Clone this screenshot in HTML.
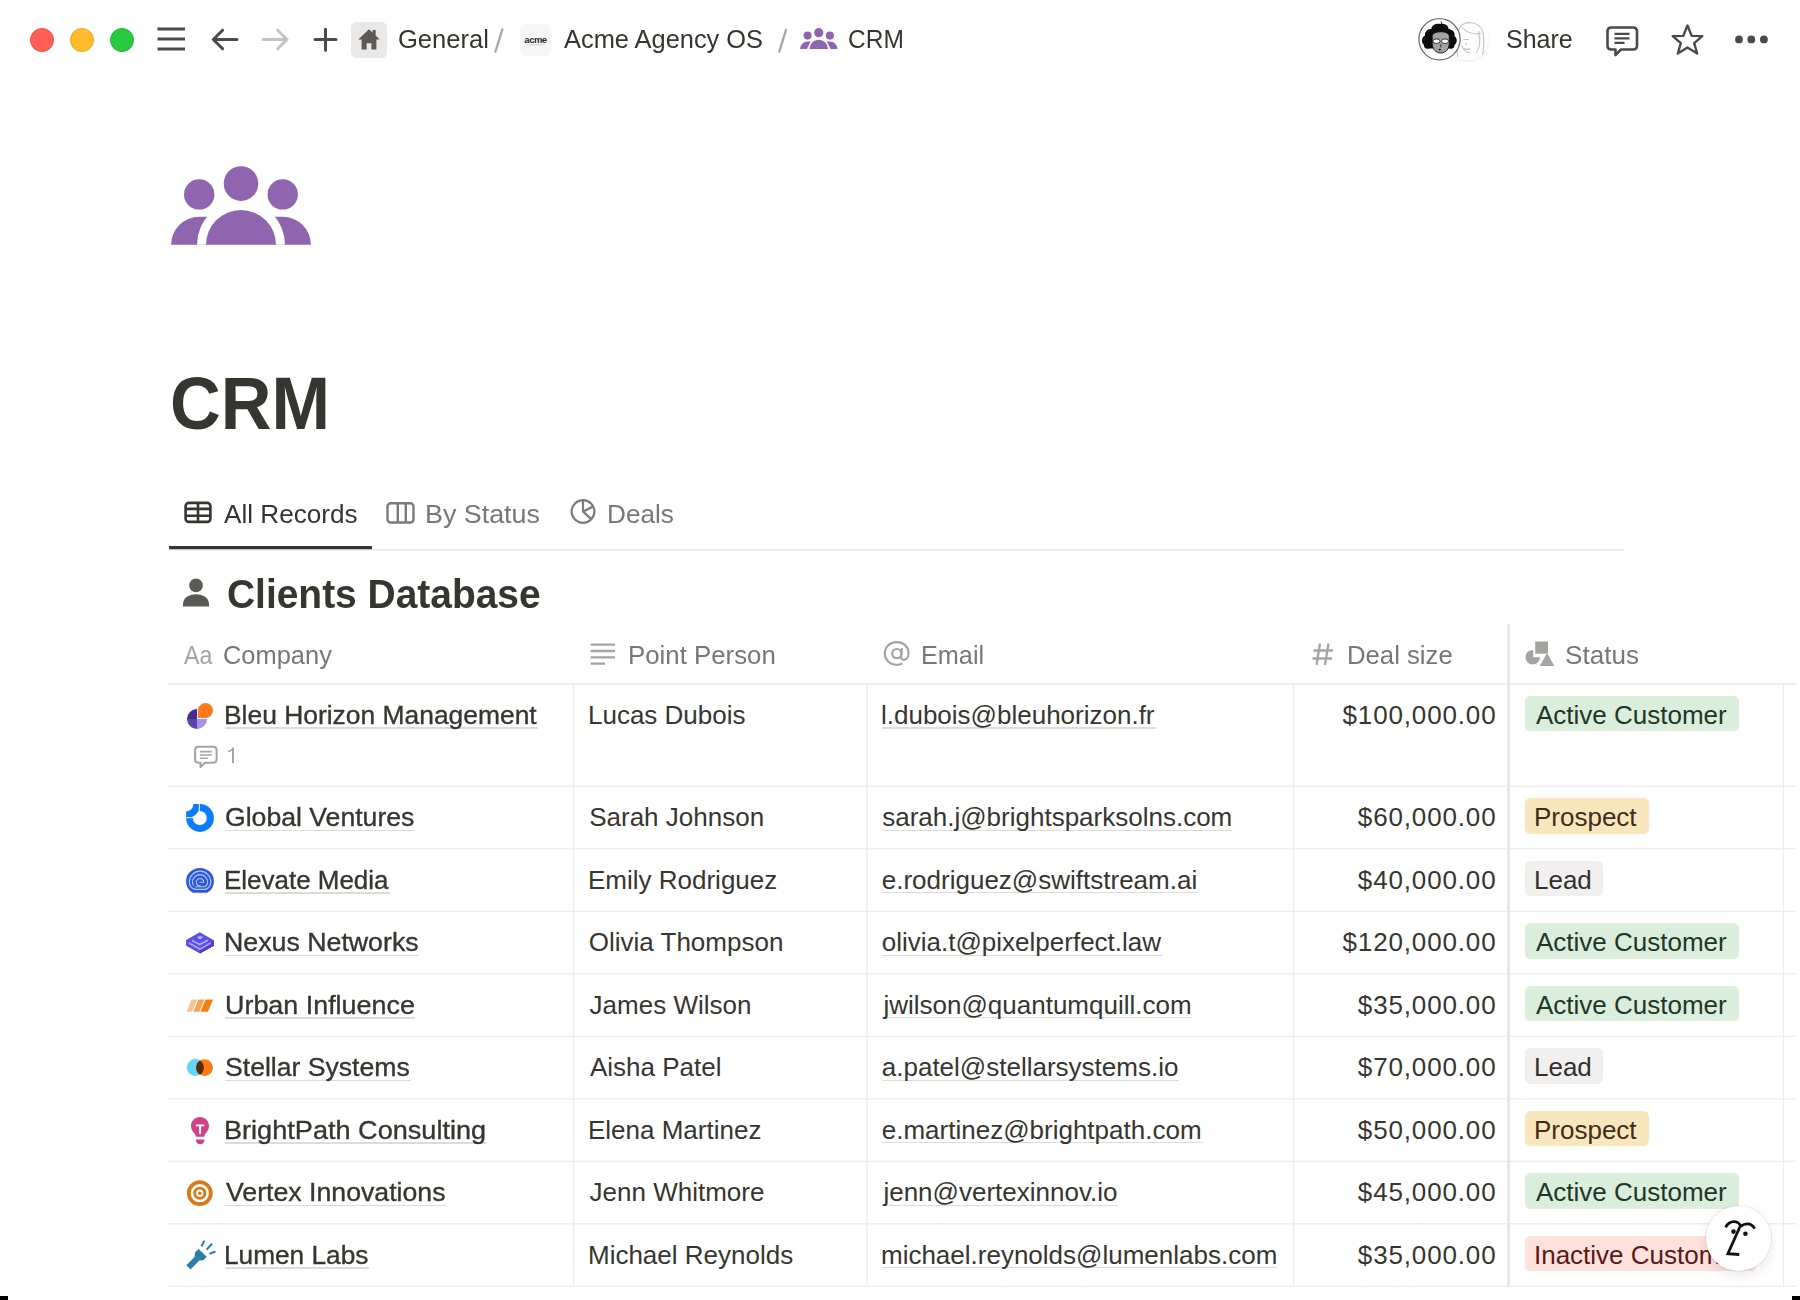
<!DOCTYPE html>
<html><head><meta charset="utf-8"><title>CRM</title>
<style>
html,body{margin:0;padding:0;background:#fff;}
body{width:1800px;height:1300px;position:relative;overflow:hidden;font-family:"Liberation Sans",sans-serif;}
.t{position:absolute;white-space:nowrap;}
.abs{position:absolute;}
svg.abs{overflow:visible;}
</style></head><body>

<svg class="abs" width="1800" height="80" viewBox="0 0 1800 80" style="left:0;top:0"><circle cx="42" cy="40" r="11.6" fill="#ff5f57" stroke="#e2463f" stroke-width="0.8"/><circle cx="82" cy="40" r="11.6" fill="#febc2e" stroke="#e1a116" stroke-width="0.8"/><circle cx="122" cy="40" r="11.6" fill="#28c840" stroke="#1aab29" stroke-width="0.8"/><g stroke="#4a4a48" stroke-width="3.2" stroke-linecap="butt"><path d="M157.5 29H185M157.5 39H185M157.5 49H185"/></g><g fill="none" stroke="#4a4a48" stroke-width="3" stroke-linecap="round" stroke-linejoin="round"><path d="M237 39.5H214M222.6 30.2L213.3 39.5L222.6 48.8"/></g><g fill="none" stroke="#c2c2c0" stroke-width="3" stroke-linecap="round" stroke-linejoin="round"><path d="M263 39.5H287M277.7 30.2L287 39.5L277.7 48.8"/></g><g fill="none" stroke="#4a4a48" stroke-width="3" stroke-linecap="round"><path d="M325.5 29.3V50.3M315 39.5H336"/></g><rect x="351" y="22" width="36" height="36" rx="5.5" fill="#e9e8e6"/><path d="M369 29.2L358.2 39.6H361.6V49.4H366.6V43.2H371.4V49.4H376.4V39.6H379.8L375.6 35.6V30H372.6V32.7Z" fill="#5c5a57"/><path d="M502.3 29.5L495.5 51.5" stroke="#a8a7a4" stroke-width="2.4" stroke-linecap="round"/><path d="M786 30L779.3 51.5" stroke="#a8a7a4" stroke-width="2.4" stroke-linecap="round"/><rect x="520" y="24" width="31" height="32" rx="6" fill="#f7f7f7"/><text x="535.5" y="43" font-family="Liberation Sans" font-weight="700" font-size="9.5" text-anchor="middle" fill="#2a2a2a" letter-spacing="-0.5">acme</text><path d="M526.5 44.8H544.5" stroke="#b0b0b0" stroke-width="0.5"/></svg>
<svg class="abs" width="40" height="24" viewBox="0 0 140 80" style="left:800px;top:28px;width:37.5px;height:21.4px"><g fill="#9065b0"><circle cx="70" cy="17.5" r="17.2"/><circle cx="28.2" cy="28.4" r="15.2"/><circle cx="111.6" cy="28.4" r="15.2"/><path d="M35 78.8A35 34.7 0 0 1 105 78.8Z"/><path d="M0 78.8A28 28 0 0 1 28 50.8H40L25.6 78.8Z"/><path d="M140 78.8A28 28 0 0 0 112 50.8H100L114.4 78.8Z"/></g></svg>
<div class="t" style="left:397.50px;top:23.66px;font-size:25.5px;line-height:30.60px;color:#37352f;transform:scaleX(1.0018);transform-origin:0 0;">General</div>
<div class="t" style="left:564.40px;top:23.66px;font-size:25.5px;line-height:30.60px;color:#37352f;transform:scaleX(0.9961);transform-origin:0 0;">Acme Agency OS</div>
<div class="t" style="left:847.85px;top:23.66px;font-size:25.5px;line-height:30.60px;color:#37352f;transform:scaleX(0.9609);transform-origin:0 0;">CRM</div>
<div class="t" style="left:1506.22px;top:23.66px;font-size:25.5px;line-height:30.60px;color:#37352f;transform:scaleX(0.9816);transform-origin:0 0;">Share</div>
<svg class="abs" width="400" height="80" viewBox="1400 0 400 80" style="left:1400px;top:0"><defs><filter id="sh" x="-30%" y="-30%" width="160%" height="160%"><feDropShadow dx="0" dy="1" stdDeviation="1.5" flood-color="#000" flood-opacity="0.10"/></filter></defs><circle cx="1467.5" cy="39.5" r="20.5" fill="#fff" filter="url(#sh)"/><g fill="none" stroke="#c3c3c3" stroke-width="1.1"><path d="M1458 57C1455.5 49 1456 32 1461 26C1466 21 1476 21.5 1481 28C1484.5 33 1484.5 46 1482.5 55"/><path d="M1462 27.5C1467 33 1474.5 34.5 1481 33.5"/><path d="M1478.5 31C1480.5 39 1480 48 1476 53"/><path d="M1461 45C1463.5 50 1467 53 1471 53"/><path d="M1463.5 39.5H1469M1466 42.5V45"/><path d="M1464 48.5C1466 49.5 1468.5 49.5 1470 48.5"/></g><circle cx="1439.5" cy="39.3" r="20.6" fill="#fff" stroke="#707070" stroke-width="1.3"/><path d="M1424 45C1420.5 42 1422 37 1425 35.5C1424.5 31.5 1428 28.5 1431.5 29C1431 25.5 1436 23.3 1440 24C1444.5 23.3 1449 25.5 1448.5 29.5C1452 29 1455.5 32 1454.5 36C1457.5 38 1457.5 43 1454.5 45C1455 48 1452 49.5 1449.5 48.5L1429.5 48.5C1427 49.5 1423.5 48 1424 45Z" fill="#0d0d0d"/><path d="M1432.2 36.5C1432.2 33.5 1435.5 31.8 1440.8 31.8C1446 31.8 1449.3 33.5 1449.3 36.5V43C1449.3 49 1445.5 53 1440.8 53C1436 53 1432.2 49 1432.2 43Z" fill="#a3a3a3" stroke="#0d0d0d" stroke-width="0.9"/><path d="M1430 33.5C1434 30.5 1447 30.5 1451 33.5L1451 30C1446 27 1435 27 1430 30Z" fill="#0d0d0d"/><g fill="#fff" stroke="#0d0d0d" stroke-width="0.8"><ellipse cx="1436.5" cy="41.2" rx="3.6" ry="2.3"/><ellipse cx="1445" cy="41.2" rx="3.6" ry="2.3"/></g><path d="M1440.8 44V47.5" stroke="#0d0d0d" stroke-width="0.7"/><ellipse cx="1439.8" cy="49.6" rx="1.3" ry="0.8" fill="#0d0d0d"/><path d="M1441 21.5L1442.2 25" stroke="#0d0d0d" stroke-width="0.9"/><g fill="none" stroke="#4a4a48" stroke-width="2.6" stroke-linejoin="round" stroke-linecap="round"><path d="M1611.5 27.5H1633C1635.5 27.5 1637 29 1637 31.5V45.5C1637 48 1635.5 49.5 1633 49.5H1621L1615.5 55V49.5H1611.5C1609 49.5 1607.5 48 1607.5 45.5V31.5C1607.5 29 1609 27.5 1611.5 27.5Z"/><path d="M1614.5 33.9H1629.5M1614.5 38.3H1629.5M1614.5 42.9H1624.5" stroke-width="2.2" stroke-linecap="butt"/></g><path d="M1687.5 25.5L1691.7 35.9L1702.3 36.1L1694.2 43.2L1697.2 53.5L1687.5 47.5L1677.8 53.5L1680.8 43.2L1672.7 36.1L1683.3 35.9Z" fill="none" stroke="#4a4a48" stroke-width="2.4" stroke-linejoin="round"/><g fill="#4a4a48"><circle cx="1739" cy="39.4" r="3.9"/><circle cx="1751.3" cy="39.4" r="3.9"/><circle cx="1763.9" cy="39.4" r="3.9"/></g></svg>
<svg class="abs" width="140" height="80" viewBox="171 165 140 80" style="left:171px;top:165px"><g fill="#9065b0"><path d="M171.1 244.8A28 28 0 0 1 199.1 216.8H215V244.8Z"/><path d="M310.9 244.8A28 28 0 0 0 282.9 216.8H267V244.8Z"/><path d="M197 244.8A44 44 0 0 1 285 244.8Z" fill="#fff"/><path d="M206 244.8A35 34.7 0 0 1 276 244.8Z"/><circle cx="241" cy="183.6" r="17.3"/><circle cx="199.2" cy="194.4" r="15.2"/><circle cx="282.7" cy="194.4" r="15.2"/></g></svg>
<div class="t" style="left:169.80px;top:358.67px;font-size:74.5px;line-height:89.40px;color:#37352f;font-weight:700;transform:scaleX(0.9432);transform-origin:0 0;">CRM</div>
<svg class="abs" width="1800" height="60" viewBox="0 495 1800 60" style="left:0;top:495px"><g fill="none" stroke="#37352f" stroke-width="2.6"><rect x="185.6" y="502.9" width="24.8" height="19" rx="3.2"/><path d="M185.6 508.9H210.4M185.6 515.7H210.4M198 502.9V521.9"/></g><g fill="none" stroke="#7b7a77" stroke-width="2.4"><rect x="387.5" y="503.3" width="26" height="19.2" rx="3.2"/><path d="M397.8 503.3V522.5M405.8 503.3V522.5"/></g><g fill="none" stroke="#7b7a77" stroke-width="2.2"><circle cx="583" cy="511.5" r="11.4"/><path d="M583 500.3V511.5L591 518.9M583 511.5L593.2 506.6"/></g><rect x="169" y="549" width="1455" height="1.6" fill="#e9e9e7"/><rect x="169" y="546" width="203" height="3.2" fill="#37352f"/></svg>
<div class="t" style="left:224.30px;top:499.19px;font-size:26px;line-height:31.20px;color:#37352f;transform:scaleX(1.0044);transform-origin:0 0;">All Records</div>
<div class="t" style="left:424.90px;top:499.19px;font-size:26px;line-height:31.20px;color:#787774;transform:scaleX(1.0329);transform-origin:0 0;">By Status</div>
<div class="t" style="left:607.26px;top:499.19px;font-size:26px;line-height:31.20px;color:#787774;transform:scaleX(1.0058);transform-origin:0 0;">Deals</div>
<svg class="abs" width="30" height="32" viewBox="182 577 30 32" style="left:182px;top:577px"><g fill="#5a5955"><circle cx="196" cy="585.4" r="6.8"/><path d="M183 606.6V604C183 598 189 594.3 196 594.3C203 594.3 209 598 209 604V606.6Z"/></g></svg>
<div class="t" style="left:226.78px;top:570.26px;font-size:40.5px;line-height:48.60px;color:#37352f;font-weight:700;transform:scaleX(0.9608);transform-origin:0 0;">Clients Database</div>
<svg class="abs" width="1800" height="1300" viewBox="0 0 1800 1300" style="left:0;top:0"><rect x="168" y="683.2" width="1628" height="1.6" fill="#e9e9e8"/><rect x="168" y="785.7" width="1628" height="1.2" fill="#ececeb"/><rect x="168" y="848.2" width="1628" height="1.2" fill="#ececeb"/><rect x="168" y="910.7" width="1628" height="1.2" fill="#ececeb"/><rect x="168" y="973.2" width="1628" height="1.2" fill="#ececeb"/><rect x="168" y="1035.7" width="1628" height="1.2" fill="#ececeb"/><rect x="168" y="1098.2" width="1628" height="1.2" fill="#ececeb"/><rect x="168" y="1160.7" width="1628" height="1.2" fill="#ececeb"/><rect x="168" y="1223.2" width="1628" height="1.2" fill="#ececeb"/><rect x="168" y="1285.7" width="1628" height="1.2" fill="#ececeb"/><rect x="572.9" y="684" width="1.2" height="602.3" fill="#ececeb"/><rect x="866.4" y="684" width="1.2" height="602.3" fill="#ececeb"/><rect x="1292.9" y="684" width="1.2" height="602.3" fill="#ececeb"/><rect x="1782.9" y="684" width="1.2" height="602.3" fill="#ececeb"/><rect x="1507.2" y="624" width="2.8" height="663" fill="#e6e6e5"/></svg>
<svg class="abs" width="1800" height="40" viewBox="0 635 1800 40" style="left:0;top:635px"><g stroke="#a5a4a1" stroke-width="2.3"><path d="M590.6 644.6H615M590.6 651H615M590.6 657.3H615M590.6 663.6H605"/></g><g fill="none" stroke="#a5a4a1" stroke-width="2.2"><path d="M902.5 663.4C900.6 664.4 898.8 664.8 896.8 664.8C889.8 664.8 884.8 659.8 884.8 653.5C884.8 647 889.8 642.2 896.8 642.2C903.6 642.2 908.6 646.8 908.6 652.8C908.6 657 906.6 659.8 903.8 659.8C901.8 659.8 900.8 658.5 901 656.5L902 648"/><circle cx="896.8" cy="653.6" r="4.6"/></g><g stroke="#a5a4a1" stroke-width="2.3"><path d="M1320 643.5L1316.5 665M1328.5 643.5L1325 665M1313.5 650.5H1333M1312.5 658.5H1332"/></g><g fill="#a5a4a1"><path d="M1535.2 641.4H1548V652C1548 653 1547 653.8 1546 653.8H1535.2Z"/><path d="M1533.2 650A7.3 7.3 0 1 0 1540 657.2H1533.2Z"/><path d="M1547 653L1554.4 666H1539.8Z"/></g></svg>
<div class="t" style="left:184.00px;top:640.15px;font-size:25.3px;line-height:30.36px;color:#a5a4a1;transform:scaleX(0.9162);transform-origin:0 0;">Aa</div>
<div class="t" style="left:222.81px;top:640.15px;font-size:25.3px;line-height:30.36px;color:#787774;transform:scaleX(1.0057);transform-origin:0 0;">Company</div>
<div class="t" style="left:627.68px;top:640.15px;font-size:25.3px;line-height:30.36px;color:#787774;transform:scaleX(1.0201);transform-origin:0 0;">Point Person</div>
<div class="t" style="left:921.03px;top:640.15px;font-size:25.3px;line-height:30.36px;color:#787774;transform:scaleX(0.9980);transform-origin:0 0;">Email</div>
<div class="t" style="left:1347.29px;top:640.15px;font-size:25.3px;line-height:30.36px;color:#787774;transform:scaleX(1.0163);transform-origin:0 0;">Deal size</div>
<div class="t" style="left:1564.69px;top:640.15px;font-size:25.3px;line-height:30.36px;color:#787774;transform:scaleX(1.0307);transform-origin:0 0;">Status</div>
<div class="abs" style="left:225px;top:727.3px;width:313.2px;height:1.5px;background:#dcdbd9"></div>
<div class="t" style="left:224.24px;top:700.09px;font-size:26px;line-height:31.20px;color:#37352f;transform:scaleX(1.0157);transform-origin:0 0;-webkit-text-stroke:0.35px #37352f;">Bleu Horizon Management</div>
<div class="t" style="left:587.97px;top:700.09px;font-size:26px;line-height:31.20px;color:#37352f;">Lucas Dubois</div>
<div class="abs" style="left:882px;top:727.2px;width:273.8px;height:1.4px;background:#dcdbd9"></div>
<div class="t" style="left:880.98px;top:700.09px;font-size:26px;line-height:31.20px;color:#37352f;">l.dubois@bleuhorizon.fr</div>
<div class="t" style="left:1342.56px;top:700.09px;font-size:26px;line-height:31.20px;color:#37352f;letter-spacing:0.85px;">$100,000.00</div>
<div class="abs" style="left:1525px;top:695.7px;width:213.8px;height:35.8px;border-radius:5.5px;background:#dbeddb"></div>
<div class="t" style="left:1536.00px;top:700.09px;font-size:26px;line-height:31.20px;color:#1c3829;">Active Customer</div>
<div class="abs" style="left:225px;top:829.6px;width:189.8px;height:1.5px;background:#dcdbd9"></div>
<div class="t" style="left:225.05px;top:802.39px;font-size:26px;line-height:31.20px;color:#37352f;transform:scaleX(1.0236);transform-origin:0 0;-webkit-text-stroke:0.35px #37352f;">Global Ventures</div>
<div class="t" style="left:589.19px;top:802.39px;font-size:26px;line-height:31.20px;color:#37352f;">Sarah Johnson</div>
<div class="abs" style="left:882px;top:829.5px;width:350.3px;height:1.4px;background:#dcdbd9"></div>
<div class="t" style="left:882.19px;top:802.39px;font-size:26px;line-height:31.20px;color:#37352f;">sarah.j@brightsparksolns.com</div>
<div class="t" style="left:1357.87px;top:802.39px;font-size:26px;line-height:31.20px;color:#37352f;letter-spacing:0.85px;">$60,000.00</div>
<div class="abs" style="left:1525px;top:798.0px;width:123.9px;height:35.8px;border-radius:5.5px;background:#f9e6bd"></div>
<div class="t" style="left:1533.97px;top:802.39px;font-size:26px;line-height:31.20px;color:#402c1b;">Prospect</div>
<div class="abs" style="left:225px;top:892.1px;width:165.1px;height:1.5px;background:#dcdbd9"></div>
<div class="t" style="left:224.27px;top:864.89px;font-size:26px;line-height:31.20px;color:#37352f;transform:scaleX(0.9982);transform-origin:0 0;-webkit-text-stroke:0.35px #37352f;">Elevate Media</div>
<div class="t" style="left:587.97px;top:864.89px;font-size:26px;line-height:31.20px;color:#37352f;">Emily Rodriguez</div>
<div class="abs" style="left:882px;top:892.0px;width:314.9px;height:1.4px;background:#dcdbd9"></div>
<div class="t" style="left:881.79px;top:864.89px;font-size:26px;line-height:31.20px;color:#37352f;">e.rodriguez@swiftstream.ai</div>
<div class="t" style="left:1357.87px;top:864.89px;font-size:26px;line-height:31.20px;color:#37352f;letter-spacing:0.85px;">$40,000.00</div>
<div class="abs" style="left:1525px;top:860.5px;width:77.5px;height:35.8px;border-radius:5.5px;background:#f1f0ef"></div>
<div class="t" style="left:1533.97px;top:864.89px;font-size:26px;line-height:31.20px;color:#32302c;">Lead</div>
<div class="abs" style="left:225px;top:954.6px;width:194.2px;height:1.5px;background:#dcdbd9"></div>
<div class="t" style="left:224.21px;top:927.39px;font-size:26px;line-height:31.20px;color:#37352f;transform:scaleX(1.0283);transform-origin:0 0;-webkit-text-stroke:0.35px #37352f;">Nexus Networks</div>
<div class="t" style="left:588.78px;top:927.39px;font-size:26px;line-height:31.20px;color:#37352f;">Olivia Thompson</div>
<div class="abs" style="left:882px;top:954.5px;width:280.8px;height:1.4px;background:#dcdbd9"></div>
<div class="t" style="left:881.79px;top:927.39px;font-size:26px;line-height:31.20px;color:#37352f;">olivia.t@pixelperfect.law</div>
<div class="t" style="left:1342.56px;top:927.39px;font-size:26px;line-height:31.20px;color:#37352f;letter-spacing:0.85px;">$120,000.00</div>
<div class="abs" style="left:1525px;top:923.0px;width:213.8px;height:35.8px;border-radius:5.5px;background:#dbeddb"></div>
<div class="t" style="left:1536.00px;top:927.39px;font-size:26px;line-height:31.20px;color:#1c3829;">Active Customer</div>
<div class="abs" style="left:225px;top:1017.1px;width:189.6px;height:1.5px;background:#dcdbd9"></div>
<div class="t" style="left:224.62px;top:989.89px;font-size:26px;line-height:31.20px;color:#37352f;transform:scaleX(1.0344);transform-origin:0 0;-webkit-text-stroke:0.35px #37352f;">Urban Influence</div>
<div class="t" style="left:589.59px;top:989.89px;font-size:26px;line-height:31.20px;color:#37352f;">James Wilson</div>
<div class="abs" style="left:882px;top:1017.0px;width:309.7px;height:1.4px;background:#dcdbd9"></div>
<div class="t" style="left:883.41px;top:989.89px;font-size:26px;line-height:31.20px;color:#37352f;">jwilson@quantumquill.com</div>
<div class="t" style="left:1357.87px;top:989.89px;font-size:26px;line-height:31.20px;color:#37352f;letter-spacing:0.85px;">$35,000.00</div>
<div class="abs" style="left:1525px;top:985.5px;width:213.8px;height:35.8px;border-radius:5.5px;background:#dbeddb"></div>
<div class="t" style="left:1536.00px;top:989.89px;font-size:26px;line-height:31.20px;color:#1c3829;">Active Customer</div>
<div class="abs" style="left:225px;top:1079.6px;width:185.6px;height:1.5px;background:#dcdbd9"></div>
<div class="t" style="left:225.47px;top:1052.39px;font-size:26px;line-height:31.20px;color:#37352f;transform:scaleX(1.0230);transform-origin:0 0;-webkit-text-stroke:0.35px #37352f;">Stellar Systems</div>
<div class="t" style="left:590.00px;top:1052.39px;font-size:26px;line-height:31.20px;color:#37352f;">Aisha Patel</div>
<div class="abs" style="left:882px;top:1079.5px;width:296.7px;height:1.4px;background:#dcdbd9"></div>
<div class="t" style="left:881.79px;top:1052.39px;font-size:26px;line-height:31.20px;color:#37352f;">a.patel@stellarsystems.io</div>
<div class="t" style="left:1357.87px;top:1052.39px;font-size:26px;line-height:31.20px;color:#37352f;letter-spacing:0.85px;">$70,000.00</div>
<div class="abs" style="left:1525px;top:1048.0px;width:77.5px;height:35.8px;border-radius:5.5px;background:#f1f0ef"></div>
<div class="t" style="left:1533.97px;top:1052.39px;font-size:26px;line-height:31.20px;color:#32302c;">Lead</div>
<div class="abs" style="left:225px;top:1142.1px;width:261.0px;height:1.5px;background:#dcdbd9"></div>
<div class="t" style="left:224.18px;top:1114.89px;font-size:26px;line-height:31.20px;color:#37352f;transform:scaleX(1.0424);transform-origin:0 0;-webkit-text-stroke:0.35px #37352f;">BrightPath Consulting</div>
<div class="t" style="left:587.97px;top:1114.89px;font-size:26px;line-height:31.20px;color:#37352f;">Elena Martinez</div>
<div class="abs" style="left:882px;top:1142.0px;width:319.6px;height:1.4px;background:#dcdbd9"></div>
<div class="t" style="left:881.79px;top:1114.89px;font-size:26px;line-height:31.20px;color:#37352f;">e.martinez@brightpath.com</div>
<div class="t" style="left:1357.87px;top:1114.89px;font-size:26px;line-height:31.20px;color:#37352f;letter-spacing:0.85px;">$50,000.00</div>
<div class="abs" style="left:1525px;top:1110.5px;width:123.9px;height:35.8px;border-radius:5.5px;background:#f9e6bd"></div>
<div class="t" style="left:1533.97px;top:1114.89px;font-size:26px;line-height:31.20px;color:#402c1b;">Prospect</div>
<div class="abs" style="left:225px;top:1204.6px;width:221.2px;height:1.5px;background:#dcdbd9"></div>
<div class="t" style="left:226.30px;top:1177.39px;font-size:26px;line-height:31.20px;color:#37352f;transform:scaleX(1.0263);transform-origin:0 0;-webkit-text-stroke:0.35px #37352f;">Vertex Innovations</div>
<div class="t" style="left:589.59px;top:1177.39px;font-size:26px;line-height:31.20px;color:#37352f;">Jenn Whitmore</div>
<div class="abs" style="left:882px;top:1204.5px;width:235.8px;height:1.4px;background:#dcdbd9"></div>
<div class="t" style="left:883.41px;top:1177.39px;font-size:26px;line-height:31.20px;color:#37352f;">jenn@vertexinnov.io</div>
<div class="t" style="left:1357.87px;top:1177.39px;font-size:26px;line-height:31.20px;color:#37352f;letter-spacing:0.85px;">$45,000.00</div>
<div class="abs" style="left:1525px;top:1173.0px;width:213.8px;height:35.8px;border-radius:5.5px;background:#dbeddb"></div>
<div class="t" style="left:1536.00px;top:1177.39px;font-size:26px;line-height:31.20px;color:#1c3829;">Active Customer</div>
<div class="abs" style="left:225px;top:1267.1px;width:144.0px;height:1.5px;background:#dcdbd9"></div>
<div class="t" style="left:224.25px;top:1239.89px;font-size:26px;line-height:31.20px;color:#37352f;transform:scaleX(1.0089);transform-origin:0 0;-webkit-text-stroke:0.35px #37352f;">Lumen Labs</div>
<div class="t" style="left:587.97px;top:1239.89px;font-size:26px;line-height:31.20px;color:#37352f;">Michael Reynolds</div>
<div class="abs" style="left:882px;top:1267.0px;width:395.4px;height:1.4px;background:#dcdbd9"></div>
<div class="t" style="left:880.98px;top:1239.89px;font-size:26px;line-height:31.20px;color:#37352f;">michael.reynolds@lumenlabs.com</div>
<div class="t" style="left:1357.87px;top:1239.89px;font-size:26px;line-height:31.20px;color:#37352f;letter-spacing:0.85px;">$35,000.00</div>
<div class="abs" style="left:1525px;top:1235.5px;width:230.6px;height:35.8px;border-radius:5.5px;background:#ffe2dd"></div>
<div class="t" style="left:1533.97px;top:1239.89px;font-size:26px;line-height:31.20px;color:#5d1715;">Inactive Customer</div>
<svg class="abs" width="1800" height="1300" viewBox="0 0 1800 1300" style="left:0;top:0"><path d="M197 719V709A10 10 0 0 0 187 719Z" fill="#4a2a8c"/><path d="M197 719H187A10 10 0 0 0 197 729Z" fill="#5f43a6"/><path d="M197 719V729A10 10 0 0 0 207 719Z" fill="#a792e6"/><path d="M198 718V710.5A7.5 7.5 0 0 1 213 710.5A7.5 7.5 0 0 1 205.5 718Z" fill="#ff7a1c"/><circle cx="200" cy="818" r="13.9" fill="#0b7cff"/><circle cx="199.8" cy="818" r="7" fill="#fff"/><rect x="185" y="803" width="14.8" height="15.2" fill="#fff"/><path d="M193.4 804.1H198.8V810.6A14.3 14.3 0 0 1 191.6 817.2H186.1V811.4A7.3 7.3 0 0 0 193.4 804.1Z" fill="#0b7cff"/><path d="M186.1 881A13.9 13 0 0 1 213.9 881C213.9 886.5 211.5 890.5 207 892.8H193C188.5 890.5 186.1 886.5 186.1 881Z" fill="#3353dc"/><g fill="none" stroke="#a6d2ff" stroke-width="1.15"><path d="M195 889.4H205.2C208.8 888 210.8 885 210.8 881.9A10.75 10.75 0 0 0 189.3 881.9C189.3 885 191.2 888 195 889.4Z"/><path d="M195.2 886.7H204.6C206.6 885.6 207.6 884 207.6 882.2A7.6 7.6 0 0 0 192.4 882.2C192.4 883.6 193 884.8 193.8 885.7"/><path d="M199.5 882.2H203.7A3.7 3.7 0 1 0 200.5 885.9"/></g><path d="M186.1 940L199.8 932.2L213.9 940.3V945.7L200 953.6L186.1 945.7Z" fill="#5a4fe4"/><path d="M200 948L213.9 940.3V945.7L200 953.6Z" fill="#4c3fd8"/><g fill="none" stroke="#a7a9ff" stroke-width="1.7"><path d="M191.9 940.5L199.8 944.6L207.9 940.3"/><path d="M188.9 943L200 949.3L210.6 943"/></g><path d="M196.8 937.6L200 935.4L203.4 937.6L200 939.8Z" fill="#a7a9ff"/><path d="M186.5 1011.8L191.6 999.5H197.2L192.1 1011.8Z" fill="#f6c48f"/><path d="M193.3 1011.8L198.4 999.5H204.4L199.3 1011.8Z" fill="#f7a24d"/><path d="M200.5 1011.8L205.6 999.5H213L207.9 1011.8Z" fill="#f57f10"/><circle cx="195.4" cy="1067.6" r="8.5" fill="#62d5f9"/><circle cx="204.6" cy="1067.6" r="8.4" fill="#fb7b16"/><path d="M200 1060.5A8.5 8.5 0 0 1 200 1074.7A8.4 8.4 0 0 1 200 1060.5Z" fill="#5a2a08"/><path d="M200 1117C194.8 1117 191 1121 191 1126C191 1129.5 193 1132 195 1134L196 1136.8H204.3L205 1134C207 1132 209 1129.5 209 1126C209 1121 205.2 1117 200 1117Z" fill="#cf4288"/><path d="M196 1139.6H204.3V1140.5C204.3 1142.8 202.4 1144.3 200.2 1144.3C198 1144.3 196 1142.8 196 1140.5Z" fill="#cf4288"/><path d="M195.8 1124.6H204.3V1126.2H201.1V1134H199.1V1126.2H195.8Z" fill="#fff"/><g fill="none" stroke="#d97a1a"><circle cx="199.8" cy="1193.2" r="11" stroke-width="3.8"/><circle cx="199.8" cy="1193.2" r="5.1" stroke-width="2.9"/></g><circle cx="199.8" cy="1193.2" r="1.8" fill="#d97a1a"/><path d="M186.35 1265.2L194.5 1257.1L195.1 1252.3L198.6 1249L206.75 1256.8L203.35 1260.2L199.4 1260.5L190.5 1269.4Z" fill="#2e7da8"/><g stroke="#2b7f9e" stroke-width="2.1" stroke-linecap="butt"><path d="M201.5 1246.4L204.3 1240.6"/><path d="M206.6 1249.6L212 1243.8"/><path d="M209.5 1253.8L215.4 1251.6"/></g></svg>
<svg class="abs" width="30" height="30" viewBox="190 742 30 30" style="left:190px;top:742px"><g fill="none" stroke="#a5a4a1" stroke-width="2" stroke-linejoin="round"><path d="M198.5 746.8H213.2C215.2 746.8 216.6 748.2 216.6 750.2V759.4C216.6 761.4 215.2 762.8 213.2 762.8H205L200.5 767V762.8H198.5C196.5 762.8 195.1 761.4 195.1 759.4V750.2C195.1 748.2 196.5 746.8 198.5 746.8Z"/><path d="M200 751.6H211.8M200 755H211.8M200 758.3H207.8" stroke-width="1.6"/></g></svg>
<svg class="abs" width="20" height="24" viewBox="224 744 20 24" style="left:224px;top:744px"><path d="M234 762.9V747.4H232.6C231.8 749.2 230.2 750.2 228.2 750.5V752.3C230.2 752.1 231.2 751.4 232 750.6V762.9Z" fill="#a5a4a1"/></svg>
<div class="abs" style="left:1705.6px;top:1205.8px;width:65.4px;height:65.4px;border-radius:50%;background:#fff;box-shadow:0 0 0 1px rgba(15,15,15,0.06),0 4px 12px rgba(15,15,15,0.10)"></div>
<svg class="abs" width="100" height="100" viewBox="1690 1190 100 100" style="left:1690px;top:1190px"><g fill="none" stroke="#111" stroke-width="2.8" stroke-linecap="butt"><path d="M1725.5 1227.3C1728 1223 1731 1221.6 1734 1221.6C1737 1221.6 1739.2 1223.2 1740.6 1225.6"/><path d="M1740.6 1226.3C1742.8 1224.5 1745 1223.8 1747.5 1223.8C1750.5 1223.8 1753 1225.6 1754.7 1228.6"/><path d="M1740.6 1225.2L1727.9 1253.7L1739.3 1254.5" stroke-linejoin="miter"/></g><circle cx="1733.5" cy="1231.6" r="2.3" fill="#111"/><circle cx="1745.4" cy="1233.8" r="2.3" fill="#111"/></svg>
<div class="abs" style="left:0;top:1296px;width:8px;height:4px;background:#000"></div>
<div class="abs" style="left:1792px;top:1296px;width:8px;height:4px;background:#000"></div>
</body></html>
